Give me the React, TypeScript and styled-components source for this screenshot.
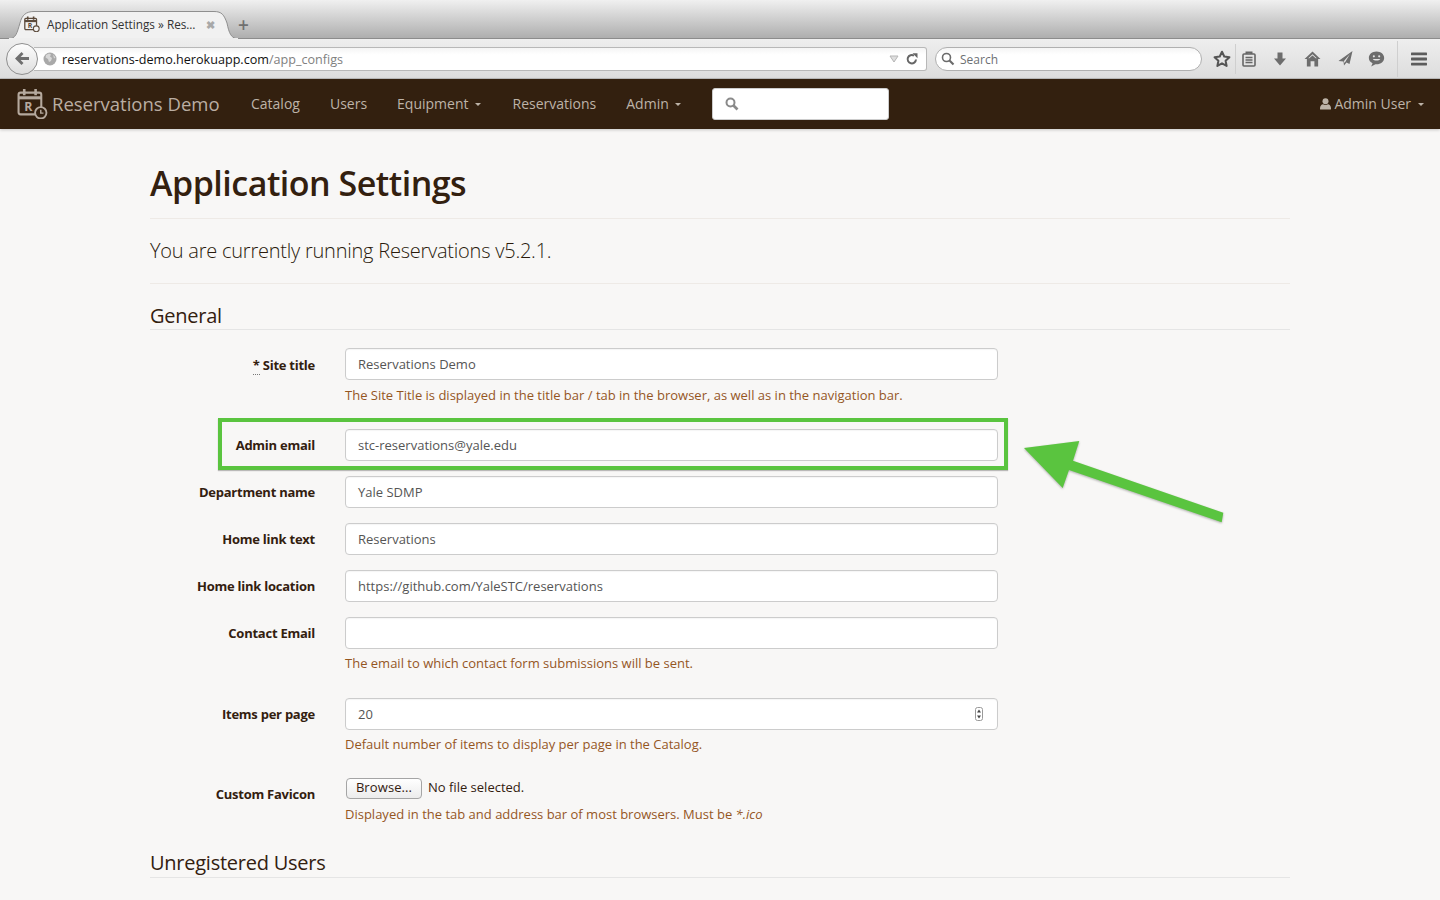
import React from "react";
import styled, { createGlobalStyle } from "styled-components";

const GlobalStyle = createGlobalStyle`
  html, body {
    margin: 0;
    height: 900px;
    overflow: hidden;
    background: #f8f7f6;
    font-family: "Open Sans", "Liberation Sans", sans-serif;
  }
  *, *::before, *::after { box-sizing: border-box; }
`;

/* browser chrome */
const TabStrip = styled.div`
  height: 39px;
  padding-left: 8px;
  display: flex;
  align-items: flex-end;
  background: linear-gradient(#f0f0f0 0, #dcdcdc 30%, #aeaeae 100%);
  border-bottom: 1px solid #8c8c8c;
`;

const Tab = styled.div`
  position: relative;
  width: 226px;
  height: 28px;
  margin-bottom: -1px;
  padding: 0 0 2px 39px;
  display: flex;
  align-items: center;
  font-size: 11.75px;
  color: #333;
`;

const TabShape = styled.svg`
  position: absolute;
  left: 0;
  top: 0;
`;

const TabIcon = styled.svg`
  position: absolute;
  left: 16px;
  top: 5px;
`;

const TabTitle = styled.span`
  position: relative;
  white-space: nowrap;
`;

const TabClose = styled.span`
  position: absolute;
  left: 198px;
  top: 6px;
  font-size: 11px;
  font-weight: 700;
  color: #a8a8a8;
`;

const NewTab = styled.span`
  margin: 0 0 3px 4px;
  font-size: 19px;
  line-height: 20px;
  font-weight: 600;
  color: #707070;
`;

const Toolbar = styled.div`
  height: 40px;
  padding: 0 0 0 6px;
  display: flex;
  align-items: center;
  background: linear-gradient(#eeeeee, #dddddd);
  border-bottom: 1px solid #bcbcbc;
`;

const BackButton = styled.div`
  width: 32px;
  height: 32px;
  border-radius: 50%;
  border: 1px solid #8f8f8f;
  background: linear-gradient(#fdfdfd, #dedede);
  display: flex;
  align-items: center;
  justify-content: center;
  position: relative;
  z-index: 1;
  flex: none;
`;

const UrlBar = styled.div`
  width: 893px;
  height: 24px;
  margin-left: -4px;
  padding: 1px 8px 0 9px;
  display: flex;
  align-items: center;
  background: linear-gradient(#f5f5f5, #ffffff 30%);
  border: 1px solid #b8b8b8;
  border-left: 0;
  border-radius: 0 3px 3px 0;
  font-size: 12.6px;
  flex: none;
`;

const UrlHost = styled.span`
  margin-left: 5px;
  color: #111;
`;

const UrlPath = styled.span`
  color: #808080;
  flex: 1;
`;

const ReloadIcon = styled.svg`
  margin-left: 7px;
`;

const SearchBar = styled.div`
  width: 267px;
  height: 24px;
  margin-left: 8px;
  padding: 1px 0 0 5px;
  display: flex;
  align-items: center;
  gap: 5px;
  background: linear-gradient(#f5f5f5, #ffffff 30%);
  border: 1px solid #b0b0b0;
  border-radius: 12px;
  font-size: 12px;
  color: #6d6f73;
  flex: none;
`;

const ToolIcons = styled.div`
  margin-left: 6px;
  display: flex;
  align-items: center;
  flex: 1;
`;

const ToolSlot = styled.div<{ $w: number; $sep?: boolean }>`
  width: ${(p) => p.$w}px;
  height: 30px;
  display: flex;
  align-items: center;
  justify-content: center;
  flex: none;
  border-right: ${(p) => (p.$sep ? "1px solid #cfcfcf" : "0")};
`;

const SeparatorSlot = styled(ToolSlot)`
  height: 36px;
`;

/* site navbar */
const Navbar = styled.nav`
  height: 50px;
  padding: 0 14px 0 17px;
  display: flex;
  align-items: center;
  background: #33200f;
  box-shadow: 0 1px 3px rgba(0, 0, 0, 0.2);
  color: #bdb3a8;
  font-size: 14px;
`;

const Brand = styled.div`
  display: flex;
  align-items: center;
  width: 234px;
  gap: 4px;
  padding-bottom: 2px;
  font-size: 18.5px;
  color: #baaea3;
  flex: none;
`;

const NavLink = styled.span`
  margin-right: 30px;
  padding-bottom: 1px;
  display: flex;
  align-items: center;
  white-space: nowrap;
`;

const Caret = styled.i`
  margin: 1px 2px 0 6px;
  width: 0;
  height: 0;
  border-left: 3.5px solid transparent;
  border-right: 3.5px solid transparent;
  border-top: 3.5px solid currentColor;
`;

const NavSearch = styled.div`
  width: 177px;
  height: 32px;
  margin-left: -1px;
  padding-left: 12px;
  display: flex;
  align-items: center;
  background: #fff;
  border: 1px solid #ccc;
  border-radius: 3px;
`;

const NavUser = styled.span`
  margin-left: auto;
  padding-bottom: 1px;
  display: flex;
  align-items: center;
  gap: 3px;

  ${Caret} {
    margin-left: 4px;
  }
`;

/* page */
const Main = styled.main`
  width: 1140px;
  margin: 0 auto;
  color: #33200f;
`;

const PageHeader = styled.header`
  height: 90px;
  padding-top: 31px;
  border-bottom: 1px solid #eeeae6;
`;

const Title = styled.h1`
  margin: 0;
  font-size: 34px;
  line-height: 46px;
  font-weight: 600;
  letter-spacing: -0.5px;
  color: #33200f;
`;

const Lead = styled.p`
  margin: 0;
  height: 65px;
  padding-top: 18px;
  font-size: 20px;
  line-height: 28px;
  font-weight: 300;
  letter-spacing: -0.23px;
  color: #2a1a0c;
  border-bottom: 1px solid #eeeae6;
`;

const Legend = styled.h3<{ $top: number; $h: number }>`
  margin: ${(p) => p.$top}px 0 0;
  height: ${(p) => p.$h}px;
  font-size: 20px;
  line-height: 27px;
  font-weight: 400;
  letter-spacing: -0.25px;
  color: #33200f;
  border-bottom: 1px solid #e5e5e5;
`;

const Form = styled.form`
  padding-top: 18px;
`;

const Row = styled.div<{ $gap: number; $highlight?: boolean }>`
  position: relative;
  display: flex;
  margin-bottom: ${(p) => p.$gap}px;

  ${(p) =>
    p.$highlight &&
    `
    &::after {
      content: "";
      position: absolute;
      left: 68px;
      top: -11px;
      width: 790px;
      height: 52px;
      border: 4px solid #5ac43f;
      box-shadow: 0 1px 1px rgba(0, 0, 0, 0.25);
      pointer-events: none;
    }
  `}
`;

const Label = styled.label<{ $low?: boolean }>`
  width: 165px;
  padding-top: ${(p) => (p.$low ? 8 : 7)}px;
  font-size: 13px;
  line-height: 18px;
  font-weight: 700;
  letter-spacing: -0.25px;
  text-align: right;
  color: #33200f;
  flex: none;
`;

const Required = styled.abbr`
  border-bottom: 1px dotted #777;
  text-decoration: none;
`;

const Field = styled.div`
  width: 653px;
  margin-left: 30px;
  flex: none;
`;

const Input = styled.div`
  position: relative;
  height: 32px;
  padding: 0 12px;
  display: flex;
  align-items: center;
  font-size: 13px;
  color: #555;
  background: #fff;
  border: 1px solid #ccc;
  border-radius: 4px;
  box-shadow: inset 0 1px 1px rgba(0, 0, 0, 0.04);
`;

const Stepper = styled.svg`
  position: absolute;
  right: 14px;
  top: 8px;
`;

const Help = styled.p<{ $top: number }>`
  margin: ${(p) => p.$top}px 0 0;
  font-size: 13px;
  line-height: 18px;
  color: #95561f;
`;

const FileLine = styled.div`
  height: 21px;
  padding-left: 1px;
  display: flex;
  align-items: flex-start;
  gap: 6px;
  font-size: 13px;
  line-height: 19px;
  color: #33200f;
`;

const BrowseButton = styled.span`
  width: 76px;
  height: 21px;
  padding-bottom: 2px;
  display: flex;
  align-items: center;
  justify-content: center;
  background: linear-gradient(#ffffff, #ececec);
  border: 1px solid #a5a5a5;
  border-radius: 4px;
  font-size: 13px;
  letter-spacing: 0.1px;
`;

const Arrow = styled.svg`
  position: absolute;
  left: 874px;
  top: 12px;
  overflow: visible;
  filter: drop-shadow(0 1px 1px rgba(0, 0, 0, 0.3));
`;

const CalendarLogo = ({ size, color }: { size: number; color: string }) => (
  <svg width={size} height={size} viewBox="0 0 30 30" fill="none" stroke={color}>
    <rect x="1.5" y="4.5" width="22" height="21" rx="2" strokeWidth="2" />
    <path d="M1.5 9.5h22" strokeWidth="3" />
    <path d="M7 1v6M18 1v6" strokeWidth="2.5" />
    <text x="7" y="22" fontSize="12" fontWeight="700" fill={color} stroke="none" fontFamily="Open Sans, sans-serif">R</text>
    <circle cx="23" cy="24" r="5.5" fill="#33200f" strokeWidth="1.8" />
    <path d="M23 21v3.3h2.6" strokeWidth="1.4" />
  </svg>
);

const SearchGlyph = ({ color, weight }: { color: string; weight: number }) => (
  <svg width="14" height="14" viewBox="0 0 14 14" fill="none" stroke={color}>
    <circle cx="5.5" cy="5.5" r="4" strokeWidth={weight} />
    <path d="M8.5 8.5l4 4" strokeWidth={weight + 0.6} />
  </svg>
);

const SimpleRow = ({ label, value }: { label: string; value: string }) => (
  <Row $gap={15}>
    <Label>{label}</Label>
    <Field>
      <Input>{value}</Input>
    </Field>
  </Row>
);

export default function App() {
  return (
    <>
      <GlobalStyle />
      <TabStrip>
        <Tab>
          <TabShape width="231" height="28" viewBox="0 0 231 28">
            <path
              d="M0 28C8 28 9 22 12 12C14 4 18 0.500 26 0.500H206C214 0.500 216 4 219 12C221 22 223 28 231 28Z"
              fill="#f1f1f1"
              stroke="#8f8f8f"
            />
            <path d="M1 28H230" stroke="#eeeeee" strokeWidth="2" />
          </TabShape>
          <TabIcon width="16" height="16" viewBox="0 0 30 30" fill="none" stroke="#5b4a3b">
            <rect x="1.5" y="4.5" width="22" height="21" rx="2" strokeWidth="2.4" />
            <path d="M1.5 9.5h22" strokeWidth="4" />
            <path d="M7 1v6M18 1v6" strokeWidth="3" />
            <text x="7" y="22" fontSize="13" fontWeight="700" fill="#5b4a3b" stroke="none" fontFamily="Open Sans, sans-serif">R</text>
            <circle cx="23" cy="24" r="5.5" fill="#f1f1f1" strokeWidth="2" />
          </TabIcon>
          <TabTitle>Application Settings » Res…</TabTitle>
          <TabClose>✖</TabClose>
        </Tab>
        <NewTab>+</NewTab>
      </TabStrip>

      <Toolbar>
        <BackButton>
          <svg width="16" height="15" viewBox="0 0 16 14" fill="#6f6f6f">
            <path d="M7.5 0.500L1 7l6.500 6.500 2-2L6.600 8.600H15V5.400H6.600l2.900-2.900z" />
          </svg>
        </BackButton>
        <UrlBar>
          <svg width="14" height="14" viewBox="0 0 14 14">
            <circle cx="7" cy="7" r="6.500" fill="#a9a9a9" />
            <path d="M3 3l3-1.500 2 1-1 2 2 1.500-1 3-2 1-1-3-2.500-1.500zM10 2.500l2.500 3-1.500 1z" fill="#d7d7d7" />
          </svg>
          <UrlHost>reservations-demo.herokuapp.com</UrlHost>
          <UrlPath>/app_configs</UrlPath>
          <svg width="10" height="8" viewBox="0 0 10 8" fill="#dedede" stroke="#b5b5b5">
            <path d="M1 1h8L5 7z" />
          </svg>
          <ReloadIcon width="12" height="12" viewBox="0 0 12 12" fill="none" stroke="#666">
            <path d="M10 6.500A4.200 4.200 0 1 1 8 2.600" strokeWidth="2" />
            <path d="M6.500 0.200h5v5z" fill="#666" stroke="none" />
          </ReloadIcon>
        </UrlBar>
        <SearchBar>
          <SearchGlyph color="#6b6b6b" weight={1.6} />
          Search
        </SearchBar>
        <ToolIcons>
          <ToolSlot $w={28} $sep>
            <svg width="18" height="18" viewBox="0 0 16 16" fill="none" stroke="#555" strokeWidth="1.8">
              <path d="M8 1.500l2 4.300 4.600.6-3.400 3.200.9 4.600L8 11.900l-4.100 2.300.9-4.600L1.400 6.400 6 5.800z" strokeLinejoin="round" />
            </svg>
          </ToolSlot>
          <ToolSlot $w={26}>
            <svg width="14" height="16" viewBox="0 0 14 16" fill="none" stroke="#666">
              <rect x="1" y="3" width="12" height="12" rx="1" strokeWidth="1.600" />
              <path d="M4.500 3V1.500h5V3" strokeWidth="2" />
              <path d="M3.500 6.500h7M3.500 9h7M3.500 11.500h7" strokeWidth="1.300" />
            </svg>
          </ToolSlot>
          <ToolSlot $w={36}>
            <svg width="14" height="16" viewBox="0 0 14 15" fill="#6d6d6d">
              <path d="M4.500 1h5v6H13l-6 7-6-7h3.500z" />
            </svg>
          </ToolSlot>
          <ToolSlot $w={28}>
            <svg width="17" height="16" viewBox="0 0 16 15" fill="#6d6d6d">
              <path d="M8 0.500L0.500 7.500h2.200V14.500h3.500V9.500h3.600v5h3.500V7.500h2.200z" />
              <path d="M8 3L4 6.700h1L8 4.200l3 2.500h1z" fill="#e5e5e5" />
            </svg>
          </ToolSlot>
          <ToolSlot $w={38}>
            <svg width="15" height="17" viewBox="0 0 15 16" fill="#6d6d6d">
              <path d="M14.500 0.500L0.500 10.500l5 .5 .5 4 2.500-3 3 1.500z" />
              <path d="M12 3.500L6 10.500l.3 2 1.200-1.500z" fill="#e5e5e5" />
            </svg>
          </ToolSlot>
          <ToolSlot $w={24}>
            <svg width="17" height="16" viewBox="0 0 16 15" fill="#6d6d6d">
              <path d="M8 0.500C3.900 0.500 0.800 3.200 0.800 6.500c0 2.200 1.400 4 3.500 5L3 14.500l4-2.100c.3 0 .7.100 1 .100 4.100 0 7.200-2.700 7.200-6S12.100 0.500 8 0.500z" />
              <path d="M4.500 7.500c1 2 6 2 7 0z" fill="#e5e5e5" />
              <circle cx="5.500" cy="5" r="1" fill="#e5e5e5" />
              <circle cx="10.500" cy="5" r="1" fill="#e5e5e5" />
            </svg>
          </ToolSlot>
          <SeparatorSlot $w={10} $sep />
          <ToolSlot $w={42}>
            <svg width="16" height="14" viewBox="0 0 15 13" fill="#5c5c5c">
              <rect y="0.500" width="15" height="2.600" rx="0.500" />
              <rect y="5.200" width="15" height="2.600" rx="0.500" />
              <rect y="9.900" width="15" height="2.600" rx="0.500" />
            </svg>
          </ToolSlot>
        </ToolIcons>
      </Toolbar>

      <Navbar>
        <Brand>
          <CalendarLogo size={31} color="#b5a99e" />
          Reservations Demo
        </Brand>
        <NavLink>Catalog</NavLink>
        <NavLink>Users</NavLink>
        <NavLink>
          Equipment
          <Caret />
        </NavLink>
        <NavLink>Reservations</NavLink>
        <NavLink>
          Admin
          <Caret />
        </NavLink>
        <NavSearch>
          <SearchGlyph color="#8a8a8a" weight={2} />
        </NavSearch>
        <NavUser>
          <svg width="11" height="12" viewBox="0 0 11 12" fill="#bdb3a8">
            <circle cx="5.500" cy="3.200" r="3" />
            <path d="M0.500 11.500c-.5 0-.5-.5-.5-1C0 8 1.500 6.300 3 6.300c1.500 1 3.500 1 5 0 1.500 0 3 1.700 3 4.200 0 .5 0 1-.5 1z" />
          </svg>
          Admin User
          <Caret />
        </NavUser>
      </Navbar>

      <Main>
        <PageHeader>
          <Title>Application Settings</Title>
        </PageHeader>
        <Lead>You are currently running Reservations v5.2.1.</Lead>
        <Legend $top={18} $h={28}>
          General
        </Legend>
        <Form>
          <Row $gap={25}>
            <Label $low>
              <Required>*</Required> Site title
            </Label>
            <Field>
              <Input>Reservations Demo</Input>
              <Help $top={6}>
                The Site Title is displayed in the title bar / tab in the browser, as well as in the navigation bar.
              </Help>
            </Field>
          </Row>
          <Row $gap={15} $highlight>
            <Label>Admin email</Label>
            <Field>
              <Input>stc-reservations@yale.edu</Input>
            </Field>
            <Arrow width="200" height="82" viewBox="0 0 200 82">
              <path d="M0 7L55.300 0 49 19.700 199.300 71.700 197.700 81.300 45 29 38.700 47z" fill="#5ac43f" />
            </Arrow>
          </Row>
          <SimpleRow label="Department name" value="Yale SDMP" />
          <SimpleRow label="Home link text" value="Reservations" />
          <SimpleRow label="Home link location" value="https://github.com/YaleSTC/reservations" />
          <Row $gap={26}>
            <Label>Contact Email</Label>
            <Field>
              <Input />
              <Help $top={5}>The email to which contact form submissions will be sent.</Help>
            </Field>
          </Row>
          <Row $gap={25}>
            <Label>Items per page</Label>
            <Field>
              <Input>
                20
                <Stepper width="8" height="14" viewBox="0 0 8 14">
                  <rect x="0.500" y="0.500" width="7" height="13" rx="2" fill="#fff" stroke="#999" />
                  <path d="M4 2.500L6 5.500H2zM4 11.500L2 8.500h4z" fill="#444" />
                </Stepper>
              </Input>
              <Help $top={5}>Default number of items to display per page in the Catalog.</Help>
            </Field>
          </Row>
          <Row $gap={0}>
            <Label>Custom Favicon</Label>
            <Field>
              <FileLine>
                <BrowseButton>Browse...</BrowseButton>
                No file selected.
              </FileLine>
              <Help $top={6}>
                Displayed in the tab and address bar of most browsers. Must be <em>*.ico</em>
              </Help>
            </Field>
          </Row>
        </Form>
        <Legend $top={26} $h={29}>
          Unregistered Users
        </Legend>
      </Main>
    </>
  );
}
